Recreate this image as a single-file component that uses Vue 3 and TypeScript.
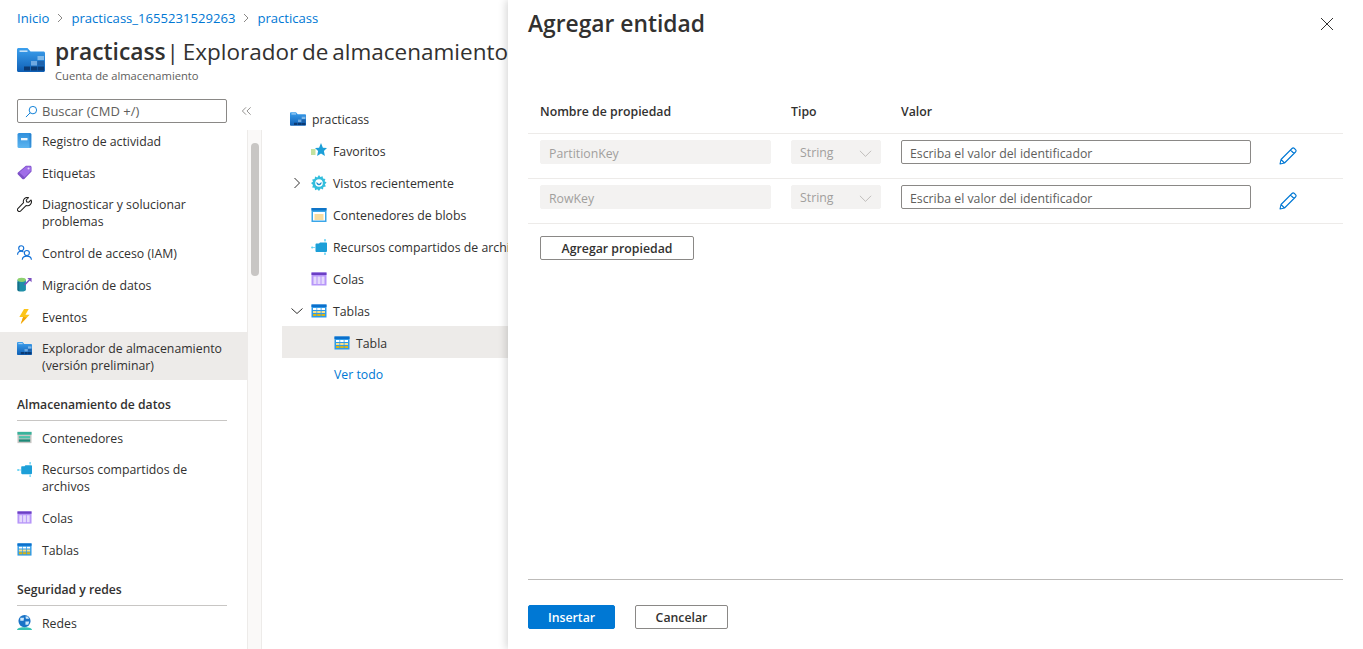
<script setup lang="ts">
interface MenuItem {
  label: string[]
  icon: string
  active?: boolean
}

const topItems: MenuItem[] = [
  { label: ['Registro de actividad'], icon: 'log' },
  { label: ['Etiquetas'], icon: 'tag' },
  { label: ['Diagnosticar y solucionar', 'problemas'], icon: 'wrench' },
  { label: ['Control de acceso (IAM)'], icon: 'iam' },
  { label: ['Migración de datos'], icon: 'migrate' },
  { label: ['Eventos'], icon: 'bolt' },
  { label: ['Explorador de almacenamiento', '(versión preliminar)'], icon: 'storage', active: true },
]

const dataItems: MenuItem[] = [
  { label: ['Contenedores'], icon: 'containers' },
  { label: ['Recursos compartidos de', 'archivos'], icon: 'files' },
  { label: ['Colas'], icon: 'queues' },
  { label: ['Tablas'], icon: 'tables' },
]

const treeItems = [
  { label: 'Favoritos', icon: 'star' },
  { label: 'Vistos recientemente', icon: 'gear', chevron: 'right' },
  { label: 'Contenedores de blobs', icon: 'blobs' },
  { label: 'Recursos compartidos de archivos', icon: 'files' },
  { label: 'Colas', icon: 'queues' },
  { label: 'Tablas', icon: 'tables', chevron: 'down' },
]

const entityRows = ['PartitionKey', 'RowKey']
</script>

<template>
  <div class="page">
    <svg class="sprite" aria-hidden="true">
      <defs>
        <linearGradient id="folderGrad" x1="0" y1="0" x2="0" y2="1">
          <stop offset="0" stop-color="#3ca0ee" />
          <stop offset="1" stop-color="#0f5fb5" />
        </linearGradient>
        <linearGradient id="logGrad" x1="0" y1="0" x2="0" y2="1">
          <stop offset="0" stop-color="#2f8fdc" />
          <stop offset="1" stop-color="#5db5f0" />
        </linearGradient>
        <symbol id="storage" viewBox="0 0 28 24">
          <path d="M0 1.500C0 .7.7 0 1.500 0h9l3 3.500h13c.8 0 1.500.7 1.500 1.500v17.500c0 .8-.7 1.500-1.500 1.500h-25C.7 24 0 23.300 0 22.500z" fill="url(#folderGrad)" />
          <path d="M2.500 2.500h8v1.300h-8z" fill="#e6f3fd" />
          <path d="M20.500 8h6.500v4h-6.500z" fill="#7fb8e8" />
          <path d="M14 13h6v4.500h-6z" fill="#6fa8e0" />
          <path d="M20.500 13h6.500v4.500h-6.500z" fill="#1f62ab" />
          <path d="M7 18.500h6v4H7zM14 18.500h6v4h-6zM20.500 18.500h6.500v4h-6.500z" fill="#0b3a73" />
        </symbol>
        <symbol id="log" viewBox="0 0 15 15">
          <rect x="0.500" y="0" width="14" height="15" rx="1.500" fill="url(#logGrad)" />
          <rect x="12.500" y="0.500" width="1.500" height="14" fill="#1a6fc0" opacity=".5" />
          <rect x="4" y="5" width="6.500" height="2.300" fill="#f2f8fd" />
        </symbol>
        <symbol id="tag" viewBox="0 0 16 16">
          <path d="M9.500 .8h4.500c.8 0 1.500.7 1.500 1.500v4.500L7.800 14.800c-.6.600-1.500.6-2.100 0L1 10c-.6-.6-.6-1.500 0-2.100z" fill="#7d50c8" />
          <path d="M9.800 1.500H14c.3 0 .8.3.8.8v4L8 13 2.500 8z" fill="#a06ee8" />
          <circle cx="12.300" cy="3.700" r="1.100" fill="#e6d8fb" />
        </symbol>
        <symbol id="wrench" viewBox="0 0 16 16">
          <path d="M15 3.200l-2.700 2.500-2-.5-.5-2L12.300.7a4.200 4.200 0 0 0-5.300 5.400L.9 12.300a2 2 0 0 0 2.800 2.800L9.900 9a4.200 4.200 0 0 0 5.100-5.800z" fill="#fff" stroke="#201f1e" stroke-width="1.100" stroke-linejoin="round" />
        </symbol>
        <symbol id="iam" viewBox="0 0 16 16">
          <g fill="none" stroke="#0f6fd6" stroke-width="1.200">
            <circle cx="4.500" cy="3.500" r="2.700" />
            <path d="M.6 10.500c0-2.200 1.700-3.800 3.900-3.800 1 0 1.800.3 2.500.9" />
            <circle cx="10.500" cy="8.500" r="2.700" />
            <path d="M5.600 15.800c.2-2.400 2.300-3.900 4.900-3.900s4.700 1.500 4.900 3.900" />
          </g>
        </symbol>
        <symbol id="migrate" viewBox="0 0 16 16">
          <path d="M.5 3v10.500c0 1.100 2 2 4.500 2s4.500-.9 4.500-2V3z" fill="#1f8fa8" />
          <path d="M.5 5v8.500c0 1 1 1.700 2 1.900V5z" fill="#156f88" />
          <ellipse cx="5" cy="3" rx="4.500" ry="2.300" fill="#8ed16f" />
          <path d="M8 8.500l6-6" stroke="#7b4fc0" stroke-width="1.600" />
          <path d="M11 1h4.500v4.500z" fill="#7b4fc0" />
        </symbol>
        <symbol id="bolt" viewBox="0 0 16 16">
          <path d="M7.500 0L2.500 8.500h4L4 16 13.500 6H9L12.500 0z" fill="#fcc419" />
          <path d="M6.500 8.500L4 16l6.500-7z" fill="#f0a30a" />
        </symbol>
        <symbol id="containers" viewBox="0 0 16 16">
          <rect x="0.500" y="2" width="15" height="12" fill="#c8c6c4" />
          <rect x="0.500" y="2" width="15" height="3" fill="#37b39b" />
          <rect x="2" y="6.500" width="12" height="2.500" fill="#4cc3ab" />
          <rect x="2" y="10" width="12" height="2.500" fill="#1d8a78" />
        </symbol>
        <symbol id="files" viewBox="0 0 16 16">
          <path d="M4.500 5.500c0-.5.400-1 1-1h2.500l1-1h6c.5 0 1 .4 1 1V12c0 .5-.5 1-1 1H5.500c-.6 0-1-.5-1-1z" fill="#1c9fd8" />
          <circle cx="1.200" cy="8.500" r="1.100" fill="#5fd0f3" />
          <path d="M2 8.500h2.500" stroke="#5fd0f3" stroke-width=".8" />
          <circle cx="14" cy="1" r=".9" fill="#5fd0f3" />
          <path d="M14 1v3M14 13v2" stroke="#5fd0f3" stroke-width=".6" />
          <circle cx="14" cy="15" r=".9" fill="#5fd0f3" />
        </symbol>
        <symbol id="queues" viewBox="0 0 16 16">
          <rect x="0.500" y="1.500" width="15" height="13" fill="#b796f9" />
          <rect x="0.500" y="1.500" width="15" height="2.500" fill="#6b3fc4" />
          <path d="M2.500 5.500h3v7.500h-3zM6.500 5.500h3v7.500h-3zM10.500 5.500h3v7.500h-3z" fill="#e5dafc" />
        </symbol>
        <symbol id="tables" viewBox="0 0 16 16">
          <rect x="0.500" y="1.500" width="15" height="13" fill="#2f9be8" />
          <rect x="0.500" y="1.500" width="15" height="2.500" fill="#0b6fcb" />
          <path d="M2 5h3.500v2H2zM6.200 5h3.500v2H6.200zM10.500 5H14v2h-3.500z" fill="#fff" />
          <path d="M2 8h3.500v2H2zM6.200 8h3.500v2H6.200zM10.500 8H14v2h-3.500z" fill="#f7e08a" />
          <path d="M2 11h3.500v2H2zM6.200 11h3.500v2H6.200zM10.500 11H14v2h-3.500z" fill="#d9b413" />
        </symbol>
        <symbol id="net" viewBox="0 0 16 16">
          <path d="M0 16c0-1.800 2.500-3 8-3s8 1.200 8 3z" fill="#37c2b1" />
          <circle cx="8" cy="6.500" r="6.500" fill="#1a73c7" />
          <path d="M3.500 3h4L7 6H3.500zM9 7h4l-1 3.500H9zM9 1.500h2.500L13 4H9.500z" fill="#cfe9fb" />
        </symbol>
        <symbol id="star" viewBox="0 0 16 16">
          <path d="M10 0l1.900 4.700 4.100.4-3.100 3 1 5L10 10.600 6.100 13.100l1-5L4 5.100l4.100-.4z" fill="#1c9fd8" />
          <path d="M0 7h4.500M0 9h4.500M0 11h4.500" stroke="#86c440" stroke-width="1" />
        </symbol>
        <symbol id="gear" viewBox="0 0 16 16">
          <path d="M8 0l1.300 2 2.300-.8.400 2.400 2.400.4-.8 2.300 2 1.300-1.700 1.700.9 2.200-2.400.5-.4 2.400-2.300-.8L8 16l-1.700-1.700-2.200.9-.5-2.400-2.400-.4.8-2.300L0 8l2-1.300-.8-2.300 2.400-.4.500-2.400 2.200.9z" fill="#32bedd" />
          <circle cx="8" cy="8" r="3.800" fill="#fff" />
          <path d="M5.500 7a2.600 2.600 0 1 0 5 0L8 9z" fill="#1c8fd0" />
        </symbol>
        <symbol id="blobs" viewBox="0 0 16 16">
          <rect x="0.500" y="1" width="15" height="14" fill="#3aa6e8" />
          <rect x="0.500" y="1" width="15" height="2.500" fill="#0f74c7" />
          <rect x="2" y="5" width="12" height="8.500" fill="#fff" />
          <rect x="3.500" y="7" width="9" height="6" fill="#f7dca0" />
        </symbol>
      </defs>
    </svg>

    <main class="blade">
      <nav class="crumbs">
        <a>Inicio</a>
        <svg class="crumb-sep" viewBox="0 0 8 12"><path d="M2 2l4 4-4 4" fill="none" stroke="#8a8886" /></svg>
        <a>practicass_1655231529263</a>
        <svg class="crumb-sep" viewBox="0 0 8 12"><path d="M2 2l4 4-4 4" fill="none" stroke="#8a8886" /></svg>
        <a>practicass</a>
      </nav>

      <header class="blade-head">
        <svg class="head-icon"><use href="#storage" /></svg>
        <div>
          <h1><b>practicass</b> | Explorador de almacenamiento (versión preliminar)</h1>
          <p>Cuenta de almacenamiento</p>
        </div>
      </header>

      <div class="columns">
        <aside class="side">
          <div class="side-list">
            <div class="search">
              <svg viewBox="0 0 14 14"><circle cx="8.500" cy="5.500" r="4" fill="none" stroke="#0078d4" /><path d="M5.500 8.500L1 13" stroke="#0078d4" /></svg>
              <span>Buscar (CMD +/)</span>
            </div>
            <a v-for="item in topItems" :key="item.icon" class="side-item top" :class="{ active: item.active, single: item.label.length === 1 }">
              <svg class="ico"><use :href="'#' + item.icon" /></svg>
              <span><template v-for="line in item.label" :key="line">{{ line }}<br /></template></span>
            </a>
            <h2 class="side-title">Almacenamiento de datos</h2>
            <a v-for="item in dataItems" :key="item.icon" class="side-item" :class="{ single: item.label.length === 1 }">
              <svg class="ico"><use :href="'#' + item.icon" /></svg>
              <span><template v-for="line in item.label" :key="line">{{ line }}<br /></template></span>
            </a>
            <h2 class="side-title tight">Seguridad y redes</h2>
            <a class="side-item single">
              <svg class="ico"><use href="#net" /></svg>
              <span>Redes</span>
            </a>
          </div>
          <div class="gutter">
            <svg class="collapse" viewBox="0 0 12 10"><path d="M5.500 1l-4 4 4 4M10.500 1l-4 4 4 4" fill="none" stroke="#8a8886" /></svg>
            <div class="thumb"></div>
          </div>
        </aside>

        <section class="tree">
          <div class="tree-row root">
            <svg class="ico"><use href="#storage" /></svg>
            <span>practicass</span>
          </div>
          <div v-for="item in treeItems" :key="item.label" class="tree-row">
            <span class="caret">
              <svg v-if="item.chevron === 'right'" viewBox="0 0 12 12"><path d="M3.500 1l5 5-5 5" fill="none" stroke="#323130" /></svg>
              <svg v-if="item.chevron === 'down'" viewBox="0 0 12 12"><path d="M.5 3.500l5.500 5 5.500-5" fill="none" stroke="#323130" /></svg>
            </span>
            <svg class="ico"><use :href="'#' + item.icon" /></svg>
            <span>{{ item.label }}</span>
          </div>
          <div class="tree-row selected">
            <svg class="ico"><use href="#tables" /></svg>
            <span>Tabla</span>
          </div>
          <a class="see-all">Ver todo</a>
        </section>
      </div>
    </main>

    <aside class="panel">
      <div class="panel-head">
        <h2>Agregar entidad</h2>
        <svg class="close" viewBox="0 0 14 14"><path d="M1 1l12 12M13 1L1 13" stroke="#323130" /></svg>
      </div>

      <div class="table">
        <div class="row head">
          <span>Nombre de propiedad</span>
          <span>Tipo</span>
          <span>Valor</span>
        </div>
        <div v-for="key in entityRows" :key="key" class="row">
          <div class="field disabled">{{ key }}</div>
          <div class="field disabled select">
            <span>String</span>
            <svg viewBox="0 0 16 10"><path d="M1 1l7 7 7-7" fill="none" stroke="#b3b0ad" /></svg>
          </div>
          <input class="field" type="text" placeholder="Escriba el valor del identificador" />
          <svg class="pencil" viewBox="0 0 18 18"><path d="M13 1.500a1.700 1.700 0 0 1 2.400 0l1.100 1.100a1.700 1.700 0 0 1 0 2.400L5.500 16 1 17l1-4.500zM11.500 3l3.500 3.500M2 12.500L5.500 16" fill="none" stroke="#0078d4" stroke-width="1.100" stroke-linejoin="round" /></svg>
        </div>
        <button class="btn add" type="button">Agregar propiedad</button>
      </div>

      <footer class="panel-foot">
        <button class="btn primary" type="button">Insertar</button>
        <button class="btn cancel" type="button">Cancelar</button>
      </footer>
    </aside>
  </div>
</template>

<style>
html,
body {
  margin: 0;
  background: #fff;
  overflow: hidden;
}
</style>

<style scoped>
* {
  box-sizing: border-box;
}

.page {
  position: relative;
  width: 1363px;
  height: 649px;
  overflow: hidden;
  font-family: "Open Sans", "Noto Sans", sans-serif;
  font-size: 12.300px;
  color: #323130;
}

.sprite {
  position: absolute;
  width: 0;
  height: 0;
}

.blade {
  width: 100%;
  height: 100%;
  display: flex;
  flex-direction: column;
}

.crumbs {
  display: flex;
  align-items: center;
  height: 36px;
  padding-left: 17px;
  gap: 7px;
  color: #0078d4;
  font-size: 13.100px;
}

.crumb-sep {
  width: 8px;
  height: 12px;
}

.blade-head {
  display: flex;
  align-items: flex-start;
  gap: 10px;
  height: 63px;
  padding-left: 17px;
  white-space: nowrap;
}

.head-icon {
  width: 28px;
  height: 24px;
  margin-top: 12px;
}

.blade-head h1 {
  margin: 2px 0 0;
  font-size: 22.500px;
  line-height: 28px;
  font-weight: 400;
  word-spacing: -2px;
}

.blade-head h1 b {
  margin-right: -3px;
  font-size: 22.800px;
  font-weight: 600;
}

.blade-head p {
  margin: 2px 0 0;
  font-size: 11.200px;
  line-height: 16px;
  color: #605e5c;
}

.columns {
  flex: 1;
  min-height: 0;
  display: flex;
}

.side {
  display: flex;
  width: 262px;
  height: 100%;
}

.side-list {
  width: 247px;
}

.search {
  display: flex;
  align-items: center;
  gap: 4px;
  width: 210px;
  height: 24px;
  margin-left: 17px;
  padding-left: 7px;
  border: 1px solid #8a8886;
  border-radius: 2px;
  color: #605e5c;
  font-size: 13px;
}

.search svg {
  width: 13px;
  height: 13px;
}

.side-item {
  display: flex;
  align-items: flex-start;
  gap: 10px;
  min-height: 32px;
  padding: 7px 17px;
  line-height: 17px;
}

.side-item.top {
  padding: 8px 17px 6px;
}

.side-item.single span {
  margin-top: 1px;
}

.search + .side-item {
  margin-top: 1px;
}

.side-item.active {
  background: #edebe9;
}

.ico {
  flex: none;
  width: 15px;
  height: 15px;
  margin-top: 1px;
}

.side-title {
  margin: 0 20px 1px 17px;
  height: 41px;
  padding-top: 16px;
  border-bottom: 1px solid #c8c6c4;
  font-size: 12.200px;
  line-height: 17px;
  font-weight: 600;
}

.side-title.tight {
  height: 40px;
  padding-top: 15px;
}

.gutter {
  position: relative;
  width: 15px;
  margin-top: 31px;
  background: #faf9f8;
  border-left: 1px solid #edebe9;
  border-right: 1px solid #edebe9;
}

.collapse {
  position: absolute;
  top: -24px;
  left: -7px;
  width: 11px;
  height: 10px;
}

.thumb {
  position: absolute;
  top: 13px;
  left: 3px;
  width: 8px;
  height: 133px;
  border-radius: 4px;
  background: #c8c6c4;
}

.tree {
  flex: 1;
  padding: 4px 0 0 20px;
}

.tree-row {
  display: flex;
  align-items: center;
  height: 32px;
  white-space: nowrap;
}

.tree-row .ico {
  width: 16px;
  height: 16px;
  margin: 0 6px 0 0;
}

.tree-row.root {
  padding-left: 8px;
}

.tree-row .caret {
  display: flex;
  justify-content: center;
  width: 29px;
}

.caret svg {
  width: 12px;
  height: 12px;
}

.tree-row.selected {
  margin-top: -1px;
  padding: 2px 0 0 52px;
  background: #edebe9;
}

.see-all {
  display: block;
  margin: 8px 0 0 52px;
  color: #0078d4;
  line-height: 17px;
}

.panel {
  position: absolute;
  top: 0;
  right: 0;
  bottom: 0;
  left: 508px;
  display: flex;
  flex-direction: column;
  padding: 0 20px;
  background: #fff;
  box-shadow: -2px 0 8px rgba(0, 0, 0, 0.16);
}

.panel-head {
  display: flex;
  align-items: center;
  justify-content: space-between;
  height: 46px;
  padding-right: 9px;
}

.panel-head h2 {
  margin: 0;
  font-size: 22.800px;
  font-weight: 600;
}

.close {
  width: 14px;
  height: 14px;
  margin-top: 2px;
}

.table {
  flex: 1;
  padding-top: 54px;
}

.row {
  display: grid;
  grid-template-columns: 231px 90px 350px 18px;
  column-gap: 20px;
  align-items: start;
  height: 45px;
  padding: 6px 0 0 12px;
  border-bottom: 1px solid #edebe9;
}

.row.head {
  height: 34px;
  padding: 3px 0 0 12px;
  font-weight: 600;
}

.row.head span:nth-child(3) {
  grid-column: 3;
}

.field {
  display: flex;
  align-items: center;
  height: 24px;
  padding: 2px 8px 0;
  border: 1px solid #8a8886;
  border-radius: 2px;
  font: inherit;
  color: #323130;
  background: #fff;
  outline: none;
}

.field::placeholder {
  color: #605e5c;
  opacity: 1;
}

.field.disabled {
  border-color: #f3f2f1;
  background: #f3f2f1;
  color: #a19f9d;
}

.select {
  justify-content: space-between;
}

.select span {
  margin-top: -2px;
}

.select svg {
  width: 13px;
  height: 8px;
  margin: 1px 0 0;
}

.pencil {
  width: 18px;
  height: 18px;
  margin: 7px 0 0 8px;
}

.btn {
  height: 24px;
  border: 1px solid #8a8886;
  border-radius: 2px;
  background: #fff;
  font: inherit;
  font-weight: 600;
  color: #323130;
  padding: 0;
}

.btn.add {
  width: 154px;
  margin: 12px 0 0 12px;
}

.panel-foot {
  display: flex;
  gap: 20px;
  height: 70px;
  padding-top: 25px;
  border-top: 1px solid #bdbbb9;
}

.btn.primary {
  width: 87px;
  border-color: #0078d4;
  background: #0078d4;
  color: #fff;
}

.btn.cancel {
  width: 93px;
}
</style>
